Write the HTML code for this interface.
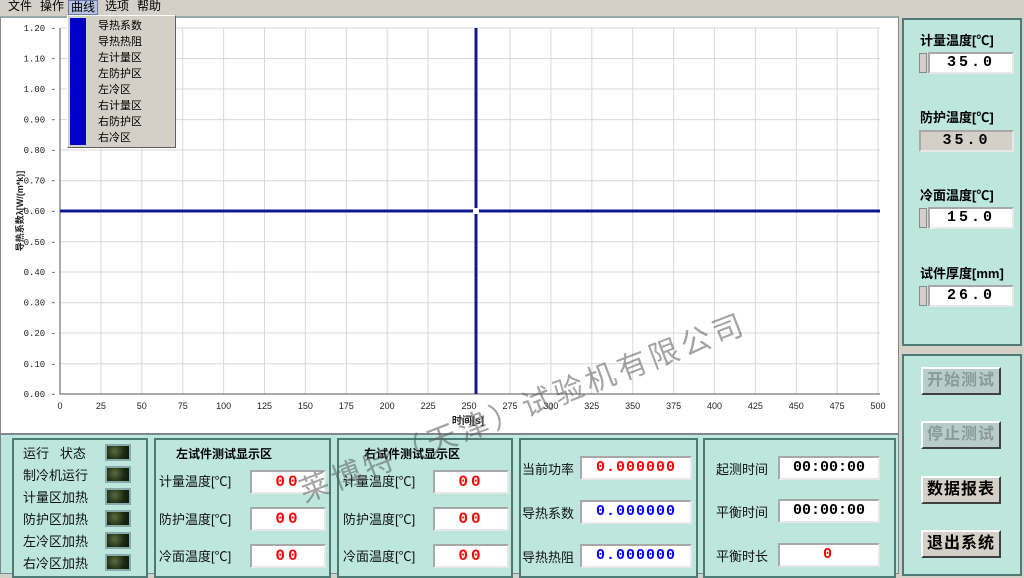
<!DOCTYPE html><html><head><meta charset="utf-8"><style>
*{margin:0;padding:0;box-sizing:border-box}
body{width:1024px;height:574px;overflow:hidden;background:#d4d0c8;font-family:"Liberation Sans","Noto Sans CJK SC",sans-serif;position:relative;font-size:12px}
.a{position:absolute}
.menu span{position:absolute;top:0;font-size:12px;line-height:13px}
.pn{position:absolute;background:#bde6dd;border:2px solid #4e7a76;}
.lbl{position:absolute;font-size:13px;color:#111;white-space:nowrap}
.box{position:absolute;background:#fff;border:2px solid;border-color:#a8a8a8 #e8e8e8 #e8e8e8 #a8a8a8;font-family:"Liberation Mono",monospace;font-weight:bold;text-align:center;letter-spacing:3px}
.led{position:absolute;width:26px;height:17px;background:radial-gradient(circle at 35% 40%,#5a6a40,#1a2a10 60%,#0d1808);border:2px solid #8aa;}
.btn{position:absolute;width:80px;height:28px;background:#d4d0c8;border:2px solid;border-color:#fff #404040 #404040 #fff;font-size:16px;font-weight:bold;text-align:center;line-height:24px;letter-spacing:1px}
.bh{position:absolute;font-size:12px;font-weight:bold}
.spin{position:absolute;width:8px;height:20px;background:#d4d0c8;border:1px solid #888}
</style></head><body>
<div class="menu">
<span style="left:8px">文件</span><span style="left:40px">操作</span><span style="left:68px;border:1px solid #6a7ab0;background:#b8c4de;padding:0 2px;left:68px">曲线</span><span style="left:105px">选项</span><span style="left:137px">帮助</span>
</div>
<div class="a" style="left:0;top:16px;width:899px;height:418px;background:#fff;border:1px solid #888;border-top:2px solid #9aa"></div>
<svg class="a" style="left:0;top:16px" width="899" height="418" viewBox="0 16 899 418">
<g stroke="#d8d8d8" stroke-width="1">
<path d="M60 28H880M60 58.5H880M60 89H880M60 119.6H880M60 150H880M60 180.7H880M60 241.8H880M60 272H880M60 302.7H880M60 333H880M60 363.8H880"/>
<path d="M100.9 28V394M141.8 28V394M182.7 28V394M223.6 28V394M264.5 28V394M305.4 28V394M346.3 28V394M387.2 28V394M428.1 28V394M510 28V394M550.9 28V394M591.8 28V394M632.7 28V394M673.6 28V394M714.5 28V394M755.4 28V394M796.3 28V394M837.2 28V394M878 28V394"/>
</g>
<path d="M60 28V394H880" stroke="#555" fill="none"/>
<path d="M60 211H880" stroke="#101890" stroke-width="3"/>
<path d="M476 28V394" stroke="#101890" stroke-width="3"/>
<rect x="473" y="208" width="6" height="6" fill="#fff"/>
<g font-family="Liberation Mono,monospace" font-size="9" text-anchor="end" fill="#222">
<text x="56" y="31">1.20 -</text><text x="56" y="61.5">1.10 -</text><text x="56" y="92">1.00 -</text><text x="56" y="122.6">0.90 -</text><text x="56" y="153">0.80 -</text><text x="56" y="183.7">0.70 -</text><text x="56" y="214">0.60 -</text><text x="56" y="244.8">0.50 -</text><text x="56" y="275">0.40 -</text><text x="56" y="305.7">0.30 -</text><text x="56" y="336">0.20 -</text><text x="56" y="366.8">0.10 -</text><text x="56" y="397">0.00 -</text>
</g>
<g font-family="Liberation Sans,sans-serif" font-size="9" text-anchor="middle" fill="#222">
<text x="60" y="409">0</text><text x="100.9" y="409">25</text><text x="141.8" y="409">50</text><text x="182.7" y="409">75</text><text x="223.6" y="409">100</text><text x="264.5" y="409">125</text><text x="305.4" y="409">150</text><text x="346.3" y="409">175</text><text x="387.2" y="409">200</text><text x="428.1" y="409">225</text><text x="469" y="409">250</text><text x="510" y="409">275</text><text x="550.9" y="409">300</text><text x="591.8" y="409">325</text><text x="632.7" y="409">350</text><text x="673.6" y="409">375</text><text x="714.5" y="409">400</text><text x="755.4" y="409">425</text><text x="796.3" y="409">450</text><text x="837.2" y="409">475</text><text x="878" y="409">500</text>
<text x="468" y="424" font-size="10" font-weight="bold" font-family="Liberation Sans,Noto Sans CJK SC,sans-serif">时间[s]</text>
<text transform="translate(23 211) rotate(-90)" font-size="9" font-weight="bold" font-family="Liberation Sans,Noto Sans CJK SC,sans-serif">导热系数λ[W/(m*k)]</text>
</g>
</svg>
<div class="a" style="left:67px;top:15px;width:109px;height:133px;background:#d4d0c8;border:1px solid;border-color:#fff #606060 #606060 #fff">
<div class="a" style="left:2px;top:2px;width:16px;height:127px;background:#0000c8"></div>
<div class="a" style="left:30px;top:2px;font-size:11px;line-height:16px">导热系数<br>导热热阻<br>左计量区<br>左防护区<br>左冷区<br>右计量区<br>右防护区<br>右冷区</div>
</div>
<div class="pn" style="left:902px;top:18px;width:120px;height:328px"></div>
<div class="bh" style="left:920px;top:30px;font-size:13px">计量温度[℃]</div>
<div class="spin" style="left:919px;top:53px"></div><div class="box" style="left:928px;top:52px;width:86px;height:22px;font-size:15px;line-height:18px">35.0</div>
<div class="bh" style="left:920px;top:107px;font-size:13px">防护温度[℃]</div>
<div class="box" style="left:919px;top:130px;width:95px;height:22px;font-size:15px;line-height:18px;background:#d4d0c8">35.0</div>
<div class="bh" style="left:920px;top:185px;font-size:13px">冷面温度[℃]</div>
<div class="spin" style="left:919px;top:208px"></div><div class="box" style="left:928px;top:207px;width:86px;height:22px;font-size:15px;line-height:18px">15.0</div>
<div class="bh" style="left:920px;top:263px;font-size:13px">试件厚度[mm]</div>
<div class="spin" style="left:919px;top:286px"></div><div class="box" style="left:928px;top:285px;width:86px;height:22px;font-size:15px;line-height:18px">26.0</div>
<div class="pn" style="left:902px;top:354px;width:120px;height:222px"></div>
<div class="btn" style="left:921px;top:367px;color:#8a9a98;background:#b8cdc8">开始测试</div>
<div class="btn" style="left:921px;top:421px;color:#8a9a98;background:#b8cdc8">停止测试</div>
<div class="btn" style="left:921px;top:476px">数据报表</div>
<div class="btn" style="left:921px;top:530px">退出系统</div>
<div class="a" style="left:0;top:434px;width:899px;height:140px;background:#bde6dd;border:1px solid #789"></div>
<div class="pn" style="left:12px;top:438px;width:136px;height:140px"></div>
<div class="lbl" style="left:23px;top:443px;line-height:22px">运行&nbsp;&nbsp;&nbsp;状态<br>制冷机运行<br>计量区加热<br>防护区加热<br>左冷区加热<br>右冷区加热</div>
<div class="led" style="left:105px;top:444px"></div><div class="led" style="left:105px;top:466px"></div><div class="led" style="left:105px;top:488px"></div><div class="led" style="left:105px;top:510px"></div><div class="led" style="left:105px;top:532px"></div><div class="led" style="left:105px;top:554px"></div>
<div class="pn" style="left:154px;top:438px;width:177px;height:140px"></div>
<div class="bh" style="left:176px;top:445px">左试件测试显示区</div>
<div class="pn" style="left:337px;top:438px;width:176px;height:140px"></div>
<div class="bh" style="left:364px;top:445px">右试件测试显示区</div>
<div class="lbl" style="left:159px;top:471px">计量温度[℃]</div><div class="box" style="left:250px;top:470px;width:76px;height:24px;color:#f00;font-size:16px;line-height:20px">00</div>
<div class="lbl" style="left:159px;top:509px">防护温度[℃]</div><div class="box" style="left:250px;top:507px;width:76px;height:24px;color:#f00;font-size:16px;line-height:20px">00</div>
<div class="lbl" style="left:159px;top:546px">冷面温度[℃]</div><div class="box" style="left:250px;top:544px;width:76px;height:24px;color:#f00;font-size:16px;line-height:20px">00</div>
<div class="lbl" style="left:343px;top:471px">计量温度[℃]</div><div class="box" style="left:433px;top:470px;width:76px;height:24px;color:#f00;font-size:16px;line-height:20px">00</div>
<div class="lbl" style="left:343px;top:509px">防护温度[℃]</div><div class="box" style="left:433px;top:507px;width:76px;height:24px;color:#f00;font-size:16px;line-height:20px">00</div>
<div class="lbl" style="left:343px;top:546px">冷面温度[℃]</div><div class="box" style="left:433px;top:544px;width:76px;height:24px;color:#f00;font-size:16px;line-height:20px">00</div>
<div class="pn" style="left:519px;top:438px;width:179px;height:140px"></div>
<div class="lbl" style="left:522px;top:459px">当前功率</div><div class="box" style="left:580px;top:456px;width:112px;height:24px;color:#f00;font-size:15px;line-height:20px;letter-spacing:1px">0.000000</div>
<div class="lbl" style="left:522px;top:503px">导热系数</div><div class="box" style="left:580px;top:500px;width:112px;height:24px;color:#00f;font-size:15px;line-height:20px;letter-spacing:1px">0.000000</div>
<div class="lbl" style="left:522px;top:547px">导热热阻</div><div class="box" style="left:580px;top:544px;width:112px;height:24px;color:#00f;font-size:15px;line-height:20px;letter-spacing:1px">0.000000</div>
<div class="pn" style="left:703px;top:438px;width:193px;height:140px"></div>
<div class="lbl" style="left:716px;top:459px">起测时间</div><div class="box" style="left:778px;top:456px;width:102px;height:24px;color:#000;font-size:15px;line-height:20px;letter-spacing:0">00:00:00</div>
<div class="lbl" style="left:716px;top:502px">平衡时间</div><div class="box" style="left:778px;top:499px;width:102px;height:24px;color:#000;font-size:15px;line-height:20px;letter-spacing:0">00:00:00</div>
<div class="lbl" style="left:716px;top:546px">平衡时长</div><div class="box" style="left:778px;top:543px;width:102px;height:24px;color:#f00;font-size:15px;line-height:20px">0</div>
<div class="a" style="left:292px;top:470px;font-size:30px;color:rgba(90,90,90,.55);transform:rotate(-21deg);transform-origin:0 0;white-space:nowrap;letter-spacing:4px">莱博特（天津）试验机有限公司</div>
</body></html>
